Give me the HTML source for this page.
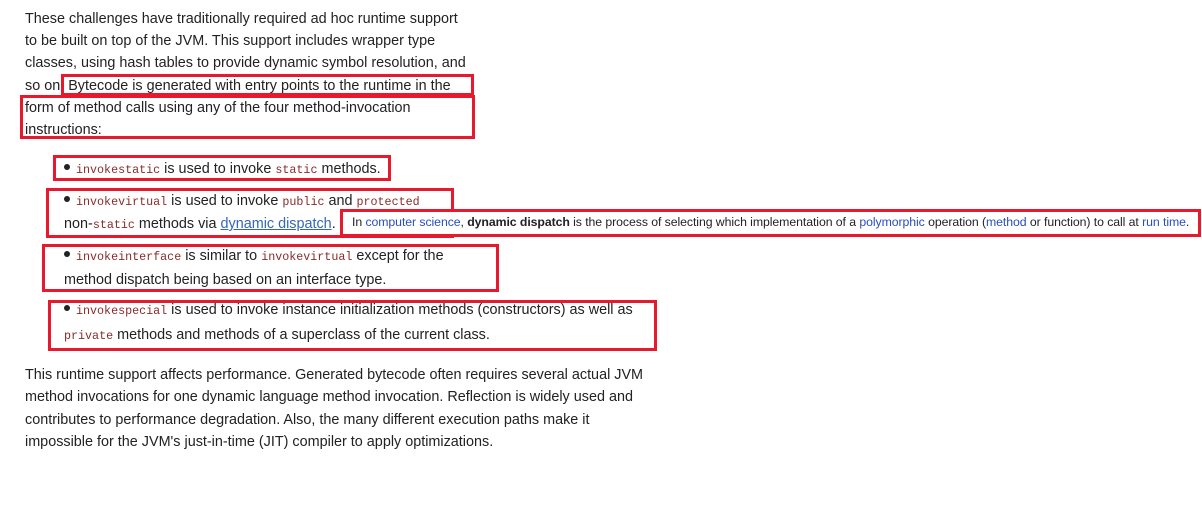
<!DOCTYPE html>
<html><head><meta charset="utf-8"><style>
html,body{margin:0;padding:0;background:#fff;width:1202px;height:524px;overflow:hidden;position:relative}
.l{position:absolute;white-space:nowrap;font-family:"Liberation Sans",sans-serif;font-size:14.4px;letter-spacing:0;color:#222;line-height:22px}
code{font-family:"Liberation Mono",monospace;font-size:11.7px;color:#8b2a2a;letter-spacing:0}
.b{position:absolute;border:3px solid #e8192c;box-sizing:border-box}
.dot{display:inline-block;width:6px;height:6px;border-radius:50%;background:#222;margin-right:6px;vertical-align:3px}
a{color:#36b;}
.tip{position:absolute;left:340px;top:209px;width:861px;height:28px;background:#fff;border:3px solid #e8192c;box-sizing:border-box;font-family:"Liberation Sans",sans-serif;font-size:12.3px;color:#222;white-space:nowrap;padding:3px 0 0 9px;letter-spacing:-0.08px;overflow:hidden}
.tip a{text-decoration:none;color:#2a4cc0}
</style></head><body>
<div class="l" style="left:25px;top:8px">These challenges have traditionally required ad hoc runtime support</div>
<div class="l" style="left:25px;top:30px">to be built on top of the JVM. This support includes wrapper type</div>
<div class="l" style="left:25px;top:52px">classes, using hash tables to provide dynamic symbol resolution, and</div>
<div class="l" style="left:25px;top:75px">so on. Bytecode is generated with entry points to the runtime in the</div>
<div class="l" style="left:25px;top:97px">form of method calls using any of the four method-invocation</div>
<div class="l" style="left:25px;top:119px">instructions:</div>

<div class="l" style="left:64px;top:158px"><span class="dot"></span><code>invokestatic</code> is used to invoke <code>static</code> methods.</div>
<div class="l" style="left:64px;top:190px"><span class="dot"></span><code>invokevirtual</code> is used to invoke <code>public</code> and <code>protected</code></div>
<div class="l" style="left:64px;top:213px">non-<code>static</code> methods via <a href="#">dynamic dispatch</a>.</div>
<div class="l" style="left:64px;top:245px"><span class="dot"></span><code>invokeinterface</code> is similar to <code>invokevirtual</code> except for the</div>
<div class="l" style="left:64px;top:269px">method dispatch being based on an interface type.</div>
<div class="l" style="left:64px;top:299px"><span class="dot"></span><code>invokespecial</code> is used to invoke instance initialization methods (constructors) as well as</div>
<div class="l" style="left:64px;top:324px"><code>private</code> methods and methods of a superclass of the current class.</div>

<div class="l" style="left:25px;top:364px">This runtime support affects performance. Generated bytecode often requires several actual JVM</div>
<div class="l" style="left:25px;top:386px">method invocations for one dynamic language method invocation. Reflection is widely used and</div>
<div class="l" style="left:25px;top:409px">contributes to performance degradation. Also, the many different execution paths make it</div>
<div class="l" style="left:25px;top:431px">impossible for the JVM's just-in-time (JIT) compiler to apply optimizations.</div>

<div class="b" style="left:61px;top:74px;width:413px;height:22px"></div>
<div class="b" style="left:20px;top:95px;width:455px;height:44px"></div>
<div class="b" style="left:53px;top:155px;width:338px;height:26px"></div>
<div class="b" style="left:46px;top:188px;width:408px;height:50px"></div>
<div class="b" style="left:42px;top:244px;width:457px;height:48px"></div>
<div class="b" style="left:48px;top:300px;width:609px;height:51px"></div>
<div class="tip">In <a href="#">computer science</a>, <b>dynamic dispatch</b> is the process of selecting which implementation of a <a href="#">polymorphic</a> operation (<a href="#">method</a> or function) to call at <a href="#">run time</a>.</div>
</body></html>
